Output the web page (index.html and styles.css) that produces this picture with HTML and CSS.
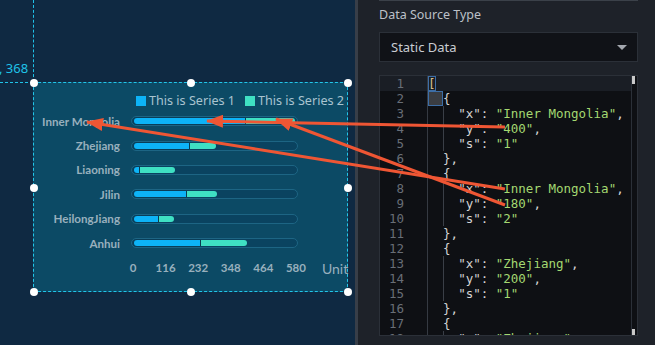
FILE: index.html
```html
<!DOCTYPE html>
<html lang="en">
<head>
<meta charset="utf-8">
<title>Data Source</title>
<link rel="stylesheet" href="styles.css">
</head>
<body>
<div class="app">
  <section class="canvas">
    <div class="guide-v"></div>
    <div class="guide-h"></div>
    <span class="coord">, 368</span>
    <div class="widget">
      <span class="hd tl"></span><span class="hd tc"></span><span class="hd tr"></span>
      <span class="hd ml"></span><span class="hd mr"></span>
      <span class="hd bl"></span><span class="hd bc"></span><span class="hd br"></span>
      <div class="legend">
        <span class="lg"><i class="sw sw-blue"></i>This is Series 1</span>
        <span class="lg"><i class="sw sw-teal"></i>This is Series 2</span>
      </div>
      <div class="rows">
        <div class="row"><span class="lbl">Inner Mongolia</span><div class="track"><i class="b1" style="width:112px"></i><i class="b2" style="width:50px"></i></div></div>
        <div class="row"><span class="lbl">Zhejiang</span><div class="track"><i class="b1" style="width:55px"></i><i class="b2" style="width:27px"></i></div></div>
        <div class="row"><span class="lbl">Liaoning</span><div class="track"><i class="b1" style="width:5px"></i><i class="b2" style="width:36px"></i></div></div>
        <div class="row"><span class="lbl">Jilin</span><div class="track"><i class="b1" style="width:52px"></i><i class="b2" style="width:31px"></i></div></div>
        <div class="row"><span class="lbl">HeilongJiang</span><div class="track"><i class="b1" style="width:24px"></i><i class="b2" style="width:16px"></i></div></div>
        <div class="row"><span class="lbl">Anhui</span><div class="track"><i class="b1" style="width:66px"></i><i class="b2" style="width:47px"></i></div></div>
      </div>
      <div class="axis">
        <div class="ticks"><span>0</span><span>116</span><span>232</span><span>348</span><span>464</span><span>580</span></div>
        <span class="unit">Unit</span>
      </div>
    </div>
  </section>
  <div class="splitter"></div>
  <aside class="panel">
    <div class="topline"></div>
    <div class="field-label">Data Source Type</div>
    <div class="select"><span>Static Data</span><span class="caret"></span></div>
    <div class="editor">
      <div class="gutter">
        <div class="gl active">1</div><div class="gl">2</div><div class="gl">3</div><div class="gl">4</div><div class="gl">5</div><div class="gl">6</div><div class="gl">7</div><div class="gl">8</div><div class="gl">9</div><div class="gl">10</div><div class="gl">11</div><div class="gl">12</div><div class="gl">13</div><div class="gl">14</div><div class="gl">15</div><div class="gl">16</div><div class="gl">17</div><div class="gl">18</div>
      </div>
      <div class="code">
        <div class="cl active"><span class="bm">[</span></div>
        <div class="cl"><span class="cur">  </span>{</div>
        <div class="cl">  <span class="ig">  </span>"x": <span class="s">"Inner Mongolia"</span>,</div>
        <div class="cl">  <span class="ig">  </span>"y": <span class="s">"400"</span>,</div>
        <div class="cl">  <span class="ig">  </span>"s": <span class="s">"1"</span></div>
        <div class="cl">  },</div>
        <div class="cl">  {</div>
        <div class="cl">  <span class="ig">  </span>"x": <span class="s">"Inner Mongolia"</span>,</div>
        <div class="cl">  <span class="ig">  </span>"y": <span class="s">"180"</span>,</div>
        <div class="cl">  <span class="ig">  </span>"s": <span class="s">"2"</span></div>
        <div class="cl">  },</div>
        <div class="cl">  {</div>
        <div class="cl">  <span class="ig">  </span>"x": <span class="s">"Zhejiang"</span>,</div>
        <div class="cl">  <span class="ig">  </span>"y": <span class="s">"200"</span>,</div>
        <div class="cl">  <span class="ig">  </span>"s": <span class="s">"1"</span></div>
        <div class="cl">  },</div>
        <div class="cl">  {</div>
        <div class="cl">  <span class="ig">  </span>"x": <span class="s">"Zhejiang"</span>,</div>
      </div>
      <div class="vscroll"><span class="thumb thumb-top"></span><span class="thumb thumb-bottom"></span></div>
    </div>
  </aside>
</div>
<svg class="arrows" width="655" height="345" viewBox="0 0 655 345">
  <defs>
    <marker id="ah" markerUnits="userSpaceOnUse" markerWidth="17" markerHeight="13" refX="16" refY="6.5" orient="auto">
      <path d="M0,0 L17,6.5 L0,13 Z" fill="#ef5634"/>
    </marker>
  </defs>
  <g stroke="#ef5634" stroke-width="3" fill="none">
    <line x1="505" y1="127" x2="207" y2="121" marker-end="url(#ah)"/>
    <line x1="505" y1="205" x2="276" y2="119" marker-end="url(#ah)"/>
    <line x1="505" y1="189" x2="87" y2="122" marker-end="url(#ah)"/>
  </g>
</svg>
</body>
</html>
```
FILE: styles.css
```css
* { box-sizing: border-box; margin: 0; padding: 0; }
html, body { width: 655px; height: 345px; overflow: hidden; }
body { position: relative; background: #1e2229; font-family: "Noto Sans", "Open Sans", sans-serif; }

.app { display: flex; height: 345px; }

/* ---------- canvas ---------- */
.canvas { position: relative; width: 355px; flex: none; background: #0f2942; overflow: hidden; }
.splitter { width: 3px; flex: none; background: #383e48; }

.guide-v { position: absolute; left: 33px; top: 0; height: 82px; border-left: 1px dashed #1fc2e8; }
.guide-h { position: absolute; left: 0; top: 82px; width: 33px; border-top: 1px dashed #1fc2e8; }
.coord { position: absolute; left: -1px; top: 59px; line-height: 18px; font-family: "Noto Sans", sans-serif; font-size: 13px; color: #1fc2e8; }

.widget {
  position: absolute; left: 33px; top: 82px; width: 315px; height: 210px;
  border: 1px dashed #22c6ea; background: #0c4a65;
  padding-top: 11px;
  font-family: Lato, sans-serif;
}
.hd { position: absolute; width: 8px; height: 8px; border-radius: 50%; background: #fff; }
.hd.tl { left: -4.5px; top: -4.5px; }
.hd.tc { left: 152.5px; top: -4.5px; }
.hd.tr { right: -4.5px; top: -4.5px; }
.hd.ml { left: -4.5px; top: 100.5px; }
.hd.mr { right: -4.5px; top: 100.5px; }
.hd.bl { left: -4.5px; bottom: -4.5px; }
.hd.bc { left: 152.5px; bottom: -4.5px; }
.hd.br { right: -4.5px; bottom: -4.5px; }

.legend { display: flex; justify-content: flex-end; gap: 10px; padding-right: 3px; height: 14px; line-height: 14px; font-family: "Noto Sans", sans-serif; font-size: 12.6px; color: #a9c4d0; }
.lg { display: flex; align-items: center; gap: 3px; white-space: nowrap; }
.sw { display: block; width: 10px; height: 10px; }
.sw-blue { background: #0db3f7; }
.sw-teal { background: #3fe0c3; }

.rows { margin-top: 1px; }
.row { display: grid; grid-template-columns: 86px 167px; column-gap: 11px; height: 24.4px; align-items: center; }
.lbl { text-align: right; font-size: 11.6px; font-weight: 700; color: #98b0bd; white-space: nowrap; }
.track {
  height: 10px; border-radius: 5px; border: 1px solid #1d6584; background: #0a4360;
  display: flex; align-items: center; padding: 0 2px;
}
.track i { display: block; height: 6px; }
.b1 { background: #0db3f7; border-radius: 3px 0 0 3px; box-shadow: 0 0 0 0.5px #083a52; }
.b2 { background: #3fe0c3; border-radius: 0 3px 3px 0; border-left: 1px solid #0a3c4e; }

.axis { display: flex; align-items: center; margin-top: 5.6px; padding-left: 82.7px; height: 14px; }
.ticks { display: grid; grid-template-columns: repeat(6, 32.6px); text-align: center; font-size: 11.5px; font-weight: 700; color: #98b0bd; }
.unit { margin-left: 9.7px; font-size: 14px; color: #98b0bd; line-height: 14px; padding-top: 2px; }

/* ---------- panel ---------- */
.panel { flex: 1; display: flex; flex-direction: column; padding: 0 17px 0 21px; background: #1e2229; }
.topline { height: 1px; background: #3b4149; }
.field-label { margin-top: 4px; height: 20px; line-height: 20px; font-size: 12.5px; color: #bcc0c7; }
.select {
  margin-top: 7px; height: 30px; display: flex; align-items: center; justify-content: space-between;
  padding: 0 10px 0 11px; background: #101217; border: 1px solid #2b3038;
  font-size: 13px; color: #c9ccd2;
}
.caret { width: 0; height: 0; border-left: 5px solid transparent; border-right: 5px solid transparent; border-top: 5px solid #a3a7ae; }

.editor {
  margin-top: 13px; height: 261px; display: flex; position: relative; overflow: hidden;
  border: 1px solid #2b3038; background: #0e1014;
  font-family: "DejaVu Sans Mono", "Liberation Mono", monospace; font-size: 12.5px; line-height: 15px;
}
.gutter { width: 47px; flex: none; text-align: right; color: #686e77; }
.gl { height: 15px; padding-right: 23px; }
.gl.active, .cl.active { background: #1a1e25; }
.code { flex: 1; border-left: 1px solid #353a42; color: #d4d4d4; }
.cl { height: 15px; white-space: pre; }
.s { color: #a4d871; }
.bm { outline: 1px solid #3d6ea6; outline-offset: -1px; color: #d8c08a; }
.cur { background: #3a3d42; box-shadow: inset 0 0 0 1px #3d6ea6; }
.ig { box-shadow: inset 1px 0 0 #3a3f47; }

.vscroll { position: relative; width: 6px; flex: none; border-left: 1px solid #2b3038; }
.thumb { position: absolute; left: 0; width: 3px; background: #c9c9c9; }
.thumb-top { top: 0; height: 8px; }
.thumb-bottom { bottom: 0; height: 6px; }

/* ---------- annotation arrows ---------- */
.arrows { position: absolute; left: 0; top: 0; pointer-events: none; }
```
